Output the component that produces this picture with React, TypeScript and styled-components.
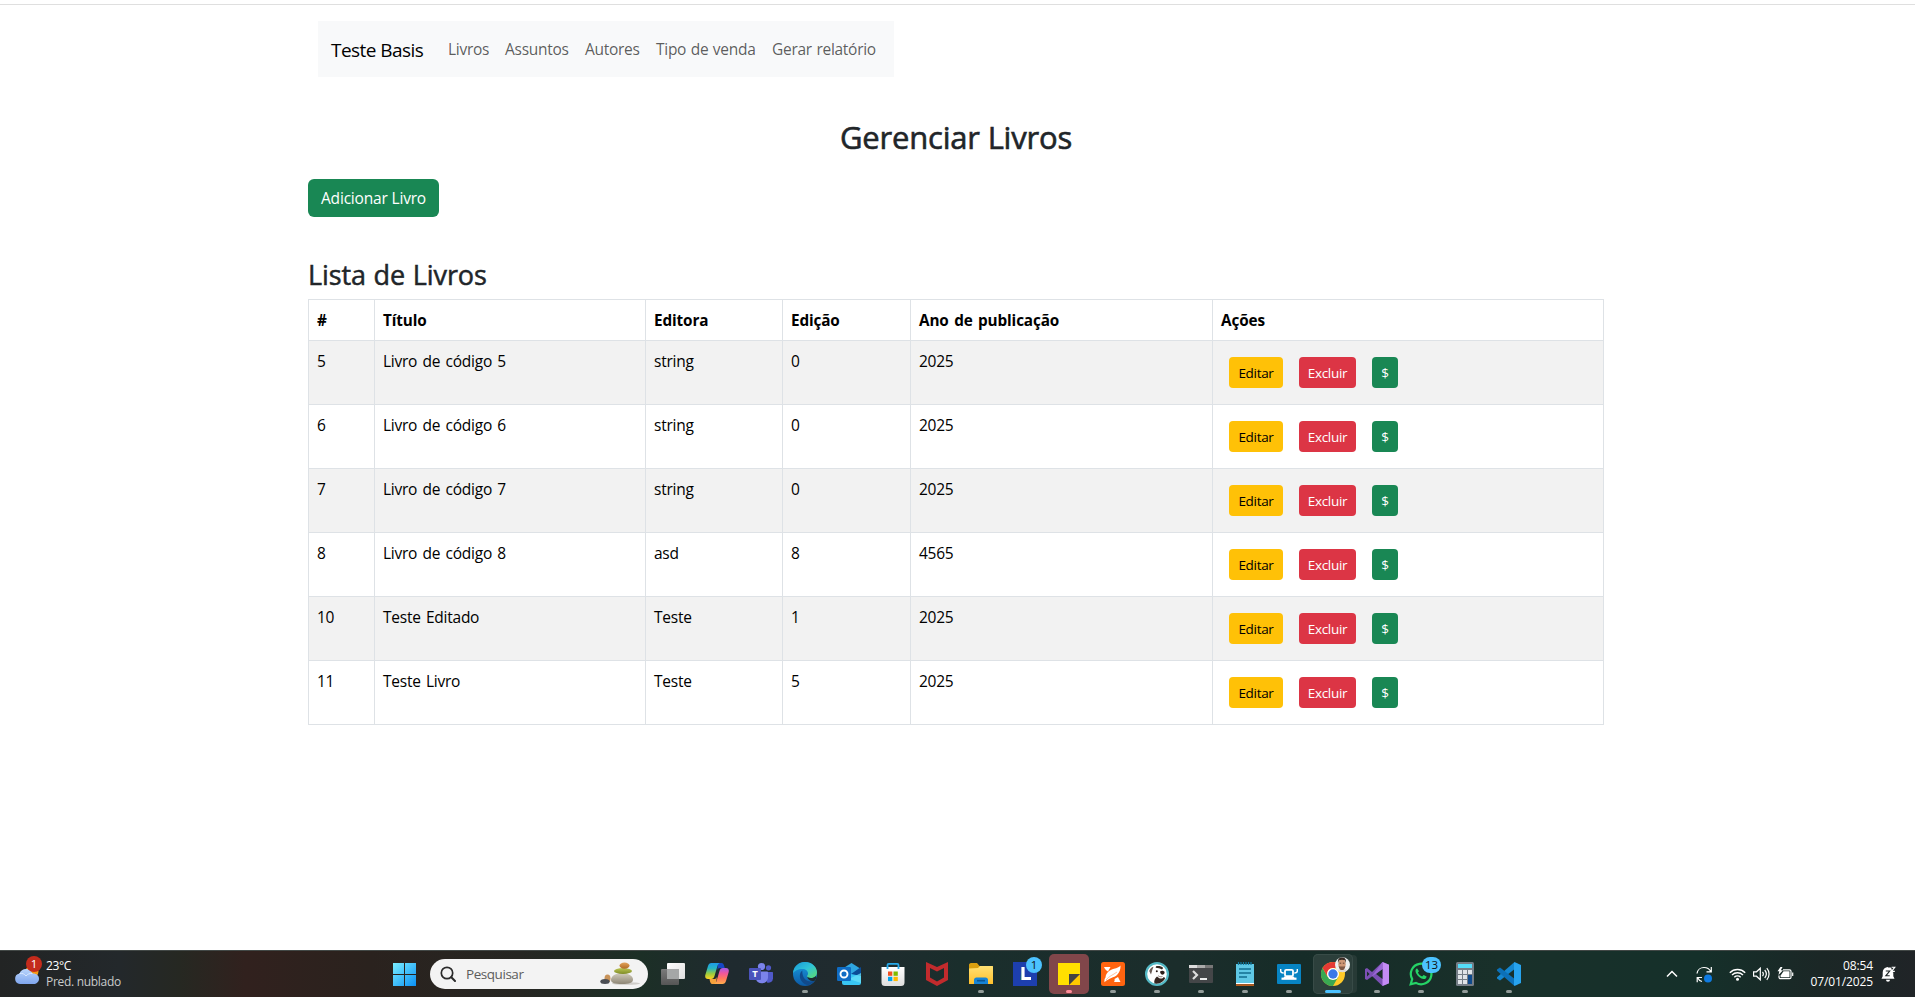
import React from 'react';
import styled, { createGlobalStyle } from 'styled-components';

const GlobalStyle = createGlobalStyle`
  *, *::before, *::after { box-sizing: border-box; }
  html, body { margin: 0; padding: 0; background: #fff; }
  body {
    font-family: "Open Sans", "Noto Sans", sans-serif;
    font-size: 15.5px;
    line-height: 24px;
    color: #212529;
    overflow: hidden;
  }
  svg { display: block; }
`;

const Screen = styled.div`
  display: flex;
  flex-direction: column;
  width: 100%;
  height: 997px;
  overflow: hidden;
`;

const Page = styled.main`
  flex: 1;
  min-height: 0;
  margin-top: 4px;
  border-top: 1px solid #dfdfdf;
`;

const Container = styled.div`
  width: 1296px;
  margin-left: 308px;
`;

const Navbar = styled.nav`
  display: flex;
  align-items: center;
  width: 576px;
  height: 56px;
  margin: 16px 0 0 10px;
  padding: 0 12px;
  background: #f8f9fa;
`;

const Brand = styled.a`
  width: 94px;
  margin: 2px 23px 0 1px;
  font-size: 19px;
  line-height: 30px;
  letter-spacing: -0.55px;
  color: #000;
  white-space: nowrap;
`;

const NavLinks = styled.div`
  display: flex;
  gap: 16px;
`;

const NavLink = styled.a<{ $w: number }>`
  width: ${(p) => p.$w}px;
  color: rgba(0, 0, 0, 0.65);
  letter-spacing: -0.28px;
  word-spacing: 0.8px;
  white-space: nowrap;
`;

const Title = styled.h1`
  margin: 41px 0 0;
  font-size: 31px;
  font-weight: 500;
  line-height: 38px;
  letter-spacing: -0.2px;
  text-align: center;
  -webkit-text-stroke: 0.6px currentColor;
`;

const Button = styled.button<{ $tone: 'success' | 'warning' | 'danger'; $small?: boolean; $w: number }>`
  width: ${(p) => p.$w}px;
  height: ${(p) => (p.$small ? 31 : 38)}px;
  padding: 0;
  border: 0;
  border-radius: ${(p) => (p.$small ? 4 : 6)}px;
  background: ${(p) => ({ success: '#198754', warning: '#ffc107', danger: '#dc3545' })[p.$tone]};
  color: ${(p) => (p.$tone === 'warning' ? '#000' : '#fff')};
  font-family: inherit;
  font-size: ${(p) => (p.$small ? 13.5 : 15.5)}px;
  letter-spacing: ${(p) => (p.$small ? -0.3 : -0.18)}px;
  white-space: nowrap;
`;

const AddRow = styled.div`
  display: flex;
  margin-top: 23px;
`;

const Subtitle = styled.h2`
  margin: 41px 0 8px;
  font-size: 27px;
  font-weight: 500;
  line-height: 33px;
  letter-spacing: -0.1px;
  word-spacing: 0.8px;
  -webkit-text-stroke: 0.5px currentColor;
`;

const Table = styled.table`
  width: 1296px;
  table-layout: fixed;
  border-collapse: collapse;
  color: #000;
  letter-spacing: -0.25px;
  word-spacing: 1.6px;
`;

const HeadCell = styled.th`
  height: 41px;
  padding: 8px;
  border: 1px solid #dee2e6;
  font-size: 15.3px;
  font-weight: 700;
  letter-spacing: -0.13px;
  text-align: left;
  white-space: nowrap;
`;

const Row = styled.tr`
  height: 64px;
  &:nth-child(odd) { background: #f2f2f2; }
`;

const Cell = styled.td`
  padding: 8px;
  border: 1px solid #dee2e6;
  vertical-align: top;
`;

const Actions = styled.div`
  display: flex;
  gap: 16px;
  padding: 8px;
`;

/* ---------- taskbar ---------- */

const Taskbar = styled.footer`
  display: flex;
  align-items: stretch;
  height: 47px;
  border-top: 1px solid #424846;
  background: linear-gradient(90deg, #222424 0, #23282b 120px, #262822 180px, #31211e 245px, #2a221e 370px,
    #262622 520px, #1c2f26 640px, #1f2a2f 730px, #202b2f 850px, #1a2e2c 960px, #1b2d2b 1180px, #162c28 1300px,
    #19302a 1500px, #15302a 1700px, #1b2726 1820px, #202427 1915px);
  color: #fff;
  font-size: 12px;
  line-height: 16px;
`;

const Weather = styled.div`
  display: flex;
  width: 388px;
  padding: 5px 0 0 13px;
`;

const WeatherText = styled.div`
  margin: 2px 0 0 4px;
  span { display: block; color: #c9cbca; letter-spacing: -0.3px; }
  span:first-child { color: #fff; letter-spacing: -0.4px; }
`;

const StartButton = styled.div`
  width: 42px;
  padding: 12px 0 0 5px;
`;

const Search = styled.div`
  display: flex;
  align-items: center;
  width: 218px;
  height: 30px;
  margin: 8px 3px 0 0;
  padding: 0 7px 0 10px;
  border-radius: 15px;
  background: #f3f3f3;
  color: #5d5d5d;
  font-size: 13.5px;
  letter-spacing: -0.45px;
  span { flex: 1; margin-left: 10px; }
`;

const AppSlot = styled.div<{ $look?: 'alert' | 'active' }>`
  position: relative;
  width: 40px;
  height: 40px;
  margin: 3px 2px 0;
  padding: 8px 8px 0;
  border-radius: 5px;
  background: ${(p) => (p.$look === 'alert' ? '#81464a' : p.$look === 'active' ? '#2c3f3b' : 'transparent')};
  box-shadow: ${(p) => (p.$look === 'active' ? 'inset 0 0 0 1px #384b47, 5px 0 0 -1px #273a36' : 'none')};
`;

const Running = styled.i<{ $look?: 'alert' | 'active' }>`
  position: absolute;
  left: 50%;
  bottom: 1px;
  width: ${(p) => (p.$look === 'active' ? 16 : 6)}px;
  height: 3px;
  border-radius: 2px;
  transform: translateX(-50%);
  background: ${(p) => (p.$look === 'alert' ? '#ff8e9b' : p.$look === 'active' ? '#4cc2ff' : '#929b99')};
`;

const Badge = styled.b<{ $w: number }>`
  position: absolute;
  top: 3px;
  left: 21px;
  width: ${(p) => p.$w}px;
  height: 16px;
  border-radius: 8px;
  background: #4cc2ff;
  color: #111;
  font-weight: 400;
  font-size: 11.5px;
  line-height: 16px;
  text-align: center;
`;

const Tray = styled.div`
  display: flex;
  align-items: center;
  margin-left: auto;
  padding: 0 19px 0 0;
`;

const TrayItem = styled.span<{ $ml: number }>`
  margin-left: ${(p) => p.$ml}px;
`;

const Clock = styled.div`
  width: 79px;
  margin: -1px 8px 0 0;
  letter-spacing: -0.12px;
  text-align: right;
  white-space: nowrap;
`;

const G = ({ id, c, v }: { id: string; c: string[]; v?: boolean }) => (
  <linearGradient id={id} x1="0" y1="0" x2={v ? '0' : '1'} y2="1">
    {c.map((s, i) => <stop key={i} offset={i / (c.length - 1)} stopColor={s} />)}
  </linearGradient>
);

const Icon = ({ children }: { children: React.ReactNode }) => (
  <svg width="24" height="24" viewBox="0 0 24 24" fill="none">{children}</svg>
);

const TaskView = () => (
  <Icon>
    <defs><G id="tv1" c={['#fff', '#dedede']} /><G id="tv2" v c={['#7b7b7b', '#555']} /></defs>
    <rect x="6" y="1" width="18" height="16" rx="1" fill="url(#tv1)" />
    <rect x="0" y="7" width="18" height="16" rx="1" fill="url(#tv2)" />
    <path d="M6 7h12v10H6z" fill="#a5a7a7" />
  </Icon>
);

const Copilot = () => (
  <Icon>
    <defs>
      <G id="cp1" v c={['#1e9be8', '#25b5c4', '#9acb3e', '#ffd021']} />
      <G id="cp2" v c={['#a35bea', '#f0569c', '#ff7a5c', '#ffad4d']} />
    </defs>
    <path d="M13 1h3.500c1.500 0 2 1 2.500 2.400l.8 2.600H15c-1.500 0-2.200.8-2.700 2.400z" fill="#1747c5" />
    <path d="M11 22H8c-1.800 0-2.500-1-3-2.600L4.500 17H9c1.600 0 2.300-.7 2.800-2.300z" fill="#f6a13c" />
    <path d="M6.500 1H15c-1.500.6-2.200 1.700-2.700 3.400L9.500 14c-.6 2-1.500 3-3.400 3H3C.7 17-.2 15.400.3 13L3 4c.6-2 1.600-3 3.500-3z" fill="url(#cp1)" />
    <path d="M17.500 22H9c1.500-.6 2.200-1.700 2.700-3.400L14.500 9c.6-2 1.500-3 3.400-3H21c2.300 0 3.200 1.600 2.700 4L21 19c-.6 2-1.600 3-3.500 3z" fill="url(#cp2)" />
  </Icon>
);

const Teams = () => (
  <Icon>
    <circle cx="19.500" cy="5.800" r="2.600" fill="#5059c9" />
    <path d="M16 10h7c.6 0 1 .4 1 1v5.500a4.500 4.500 0 0 1-6 4z" fill="#5059c9" />
    <circle cx="12.500" cy="4.500" r="3.600" fill="#7b83eb" />
    <path d="M8 9.500h10c.6 0 1 .4 1 1V16a6.300 6.300 0 0 1-12 1.500z" fill="#7b83eb" />
    <rect x="0" y="6" width="12" height="12" rx="1" fill="#4b53bc" />
    <text x="6" y="15.300" fontSize="9.500" fontWeight="700" fill="#fff" textAnchor="middle">T</text>
  </Icon>
);

const Edge = () => (
  <Icon>
    <defs><G id="ed1" c={['#1798d8', '#2fc3d8', '#5fdc6c']} /><G id="ed2" v c={['#1b9de2', '#0c59a4']} /></defs>
    <circle cx="12" cy="12" r="12" fill="url(#ed2)" />
    <path d="M0 11.500C.5 4.500 5.600 0 12 0c7 0 12 5 12 10.200 0 3.600-2.800 5.800-6 5.800-2.600 0-4-.9-4-1.800 0-.6 1-1 1-2.700C15 9 12.700 7 9.500 7 5 7 1.200 9 0 11.500z" fill="url(#ed1)" />
    <path d="M9.300 8.500C6.500 10.500 6 15.500 8.500 19c2 2.800 5 4.300 7.500 3.900 2.500-.7 4.600-2.300 5.800-4.300-6 2.400-13-.6-12.500-10.100z" fill="#114a8b" />
    <path d="M14.200 14.600c.5.800 1.800 1.400 3.800 1.400 1.800 0 3.400-.7 4.800-2.100l.7 2.100-1.700 2.700c-3.500 1.300-7-.5-7.600-4.100z" fill="#1e2b30" />
  </Icon>
);

const Outlook = () => (
  <Icon>
    <path d="M5 7l9.500-6L24 7v4l-8 5-11-4z" fill="#2fa6e0" />
    <path d="M14 12L24 5v8l-9 6z" fill="#0a4c97" />
    <path d="M5 12h9l10 2v7a2 2 0 0 1-2 2H7a2 2 0 0 1-2-2z" fill="#38c6f4" />
    <path d="M24 11v10L12 17z" fill="#67dff8" opacity=".75" />
    <rect x="0" y="5" width="14" height="14" rx="1.200" fill="#0f6cc4" />
    <circle cx="7" cy="12" r="3.500" stroke="#fff" strokeWidth="1.900" />
  </Icon>
);

const Store = () => (
  <Icon>
    <defs><G id="st" v c={['#fff', '#dedede']} /></defs>
    <path d="M.5 5h23v15.500a3.500 3.500 0 0 1-3.500 3.500H4A3.500 3.500 0 0 1 .5 20.500z" fill="url(#st)" />
    <path d="M6.500 7V3c0-.8.500-1.200 1.200-1.200h8.600c.7 0 1.200.4 1.200 1.200v4" stroke="#26a9ea" strokeWidth="1.800" />
    <path d="M7 9.500h4.300v4.300H7z" fill="#f25022" /><path d="M12.500 9.500h4.300v4.300h-4.300z" fill="#7fba00" />
    <path d="M7 14.800h4.300v4.300H7z" fill="#00a4ef" /><path d="M12.500 14.800h4.300v4.300h-4.300z" fill="#ffb900" />
  </Icon>
);

const Shield = () => (
  <Icon>
    <path d="M1 0l11 5L23 0v18l-11 6L1 18zM5 6v9.500l7 4 7-4V6l-7 3.400z" fill="#c22b2d" fillRule="evenodd" />
  </Icon>
);

const Explorer = () => (
  <Icon>
    <defs><G id="ex" v c={['#ffe074', '#ffc02c']} /></defs>
    <path d="M0 3c0-1 .7-2 2-2h6l2.500 3H24v4H0z" fill="#d99f10" />
    <path d="M0 6.500L9 6l2-2h12c.6 0 1 .5 1 1v17H0z" fill="url(#ex)" />
    <path d="M5 22v-4c0-1.300 1-2.500 2.500-2.500h9c1.500 0 2.500 1.200 2.500 2.500v4z" fill="#1684d6" />
    <path d="M8 18.700h8" stroke="#095695" strokeWidth="1.600" />
  </Icon>
);

const LetterL = () => (
  <Icon>
    <path d="M0 0h24v24H0z" fill="#1d3fae" />
    <path d="M9 6L7 18h4z" fill="#0c6b74" />
    <path d="M10 5v11.500h8" stroke="#fff" strokeWidth="3.200" />
  </Icon>
);

const Notes = () => (
  <Icon>
    <path d="M1 1h22v11L12 23H1z" fill="#ffdf00" /><path d="M23 12v11H12z" fill="#ffc800" />
    <path d="M12 12h11L12 23z" fill="#424242" />
  </Icon>
);

const OrangeBird = () => (
  <Icon>
    <rect width="24" height="24" rx="2.500" fill="#ff6410" />
    <path d="M3 5h6.500L7 9.500C5.300 8.500 3.800 7 3 5z" fill="#fff" />
    <path d="M4.500 15.500C5 11 8.500 8 13 6.800c3-.8 5-1.500 6.500-3.300.2 4-1 7-3.500 9.500-3 2.700-8 3-12.500 7.200-.3-1.800 0-3.500 1-4.700z" fill="#fff" />
    <path d="M13.500 17l3.500-2 2.500 5h-6.500c.7-.8.800-2 .5-3z" fill="#fff" />
    <path d="M5 18c3-4 7-5 11-8" stroke="#ff9a60" strokeWidth=".6" />
  </Icon>
);

const Beaver = () => (
  <Icon>
    <circle cx="12" cy="12" r="10.900" fill="#fff" stroke="#54b9c5" strokeWidth="2.200" />
    <path d="M4.200 9c.8-2.300 2.300-3.600 4.300-4.200L7.300 8 6 12.500z" fill="#6b5c55" />
    <path d="M11 4.300c3-.6 5.500 0 7.200 1.700L17 7.500c-2-1.200-4-1.600-6.300-1.700z" fill="#35261f" />
    <path d="M9.500 21.500c-.8-3 .3-5 2.500-7l2.300 1.700c2 .8 3.500.3 4.400-1.200l1.500 1c-1.500 3.800-5.700 6.300-10.700 5.500z" fill="#33241f" />
    <path d="M15.300 9.300c1.500-1 4-.5 4.300 1 .2 1.800-1.800 2.700-3 2.200-1.200-.6-1.800-2-1.300-3.200z" fill="#2b1c18" />
    <circle cx="11.800" cy="9.300" r="1" fill="#2b1c18" />
    <path d="M13 13.500c1 1.200 2.500 1.700 4.500 1" stroke="#806c63" strokeWidth=".8" />
  </Icon>
);

const Terminal = () => (
  <Icon>
    <rect y="3" width="24" height="18" rx="1" fill="#444648" />
    <path d="M0 3h8v3H0z" fill="#ddd" /><path d="M8 3h8v3H8z" fill="#aaa" /><path d="M16 3h8v3h-8z" fill="#777" />
    <path d="M4 9l4 4-4 4" stroke="#ddd" strokeWidth="2.200" /><path d="M11 17h7" stroke="#fff" strokeWidth="1.800" />
  </Icon>
);

const Notepad = () => (
  <Icon>
    <path d="M3 2h18v19H3z" fill="#5fc8e5" /><path d="M3 21h18v1.200H3z" fill="#fff" /><path d="M3 22.200h18V24H3z" fill="#b65b1c" />
    <path d="M5.500 0v3M8 0v3M10.500 0v3M13 0v3M15.500 0v3M18 0v3" stroke="#12799f" strokeWidth="1.200" />
    <path d="M6 7h12M6 11h12M6 15h8" stroke="#126e90" strokeWidth="1.700" />
  </Icon>
);

const RemoteApp = () => (
  <Icon>
    <rect y="2" width="24" height="20" rx="1" fill="#0784c3" />
    <rect x="8" y="7.800" width="8" height="6.400" rx="1.200" stroke="#fff" strokeWidth="1.800" />
    <path d="M4.500 16.700h15" stroke="#fff" strokeWidth="2.200" />
    <path d="M3.700 7v2c0 1.500.8 2 3 2M20.300 7v2c0 1.500-.8 2-3 2" stroke="#fff" strokeWidth="1.400" />
    <path d="M7.500 14.500L6 16.500h12l-1.500-2z" fill="#fff" />
  </Icon>
);

const Chrome = () => (
  <svg width="30" height="29" viewBox="0 -5 30 29">
    <circle cx="12" cy="12" r="12" fill="#ffca28" />
    <path d="M1.600 6A12 12 0 0 0 12 24l5.200-9L12 12 6.800 15z" fill="#39a852" />
    <path d="M1.600 6A12 12 0 0 1 22.400 6H12a6 6 0 0 0-5.200 9z" fill="#e53935" />
    <circle cx="12" cy="12" r="6" fill="#fff" /><circle cx="12" cy="12" r="4.700" fill="#3b78e7" />
    <circle cx="21.500" cy="2.800" r="7.500" fill="#eef0f1" />
    <path d="M17 8.500c1-1.500 2.500-2 4.500-2s3.500.5 4.500 2c-2.500 2-6.500 2-9 0z" fill="#ddd8d3" />
    <ellipse cx="21" cy="2.200" rx="3.700" ry="5.500" fill="#cf9776" />
    <path d="M17 1c-.5-4.300 1.500-5.500 4-5.500s4.500 1.200 4 5.500l-1-2.700c-2-.8-4-.8-6 0z" fill="#3a2b24" />
    <path d="M17.700 4.200c1.900.5 4.800.5 6.600 0-.3 2.400-1.500 3.900-3.300 3.900s-3-1.500-3.300-3.900z" fill="#7d5744" />
    <path d="M18.600 1.200h1.600M21.800 1.200h1.600" stroke="#4a3128" strokeWidth=".8" />
  </svg>
);

const VisualStudio = () => (
  <Icon>
    <path d="M17.500 0L24 2.800v18.400L17.500 24 7 14 2 18l-2-1V7l2-1 5 4z" fill="#7c50b5" />
    <path d="M17.500 0L24 2.800v18.400L17.500 24z" fill="#c48bf5" />
    <path d="M17.500 7v10L11 12zM2 9.500v5L4.600 12z" fill="#1b2e2a" />
    <path d="M7 14L17.500 0v7L2 18z" fill="#9a68d5" />
  </Icon>
);

const WhatsApp = () => (
  <Icon>
    <path d="M1.700 22.300l1.500-5.200A10.300 10.300 0 1 1 7 20.900z" stroke="#25d366" strokeWidth="2.200" />
    <path d="M8 6.200c-1.900 1-2 3.200-.6 5.600 1.700 2.900 4.300 4.900 7 5.300 1.800.2 3.100-1 3.200-2.700l-3-1.500-1.500 1.700c-2-.8-3.300-2.200-4.200-4l1.100-1.400z" fill="#25d366" />
  </Icon>
);

const Calculator = () => (
  <Icon>
    <rect x="3" width="18" height="24" rx="1.500" fill="#747d86" />
    <path d="M5 2h14v4H5z" fill="#55dcf8" />
    <path d="M5 8h4v4H5zM10 8h4v4h-4zM15 8h4v4h-4zM5 13h4v4H5zM10 13h4v4h-4zM5 18h4v4H5zM10 18h4v4h-4z" fill="#dfe3e7" />
    <path d="M15 13h4v9h-4z" fill="#0f4a8c" />
  </Icon>
);

const VSCode = () => (
  <Icon>
    <path d="M17.500 0L19 6 3 18.500 0 16.500v-1.200z" fill="#1486cf" />
    <path d="M0 8.700v-1.200L3 5.500 19 18l-1.500 6z" fill="#0c70b8" />
    <path d="M17.500 0L24 3v18l-6.500 3-.5-1V1z" fill="#27a3ee" />
  </Icon>
);

type App = { icon: React.FC; run?: boolean; look?: 'alert' | 'active'; badge?: string };

const apps: App[] = [
  { icon: TaskView }, { icon: Copilot }, { icon: Teams }, { icon: Edge, run: true }, { icon: Outlook },
  { icon: Store }, { icon: Shield }, { icon: Explorer, run: true }, { icon: LetterL, badge: '1' },
  { icon: Notes, run: true, look: 'alert' }, { icon: OrangeBird, run: true }, { icon: Beaver, run: true },
  { icon: Terminal, run: true }, { icon: Notepad, run: true }, { icon: RemoteApp, run: true },
  { icon: Chrome, run: true, look: 'active' }, { icon: VisualStudio, run: true },
  { icon: WhatsApp, run: true, badge: '13' }, { icon: Calculator, run: true }, { icon: VSCode, run: true },
];

const ChromeLift = styled.div`
  margin-top: -5px;
`;

const WeatherIcon = () => (
  <svg width="29" height="30" viewBox="0 0 29 30">
    <defs><G id="cl" v c={['#b9d4fb', '#7fa6ee']} /></defs>
    <circle cx="19" cy="15.500" r="6.500" fill="#f59a16" />
    <path d="M7 28a5.300 5.300 0 0 1-.5-10.500C7.500 14.500 10 13 13 13c3.200 0 5.500 1.800 6.500 4.500 3.800-.2 6.500 2 6.500 5.200S23.500 28 20.500 28z" fill="url(#cl)" />
    <path d="M6.500 17.500c3-.5 5 .5 6.500 2.500M13 20c1.500-2 3.500-2.700 6.500-2.500" stroke="#d9e8ff" fill="none" />
    <circle cx="21" cy="8" r="8" fill="#c42b1c" />
    <text x="21" y="12.300" fontSize="11.500" fill="#fff" textAnchor="middle">1</text>
  </svg>
);

const StartIcon = () => (
  <svg width="23" height="23" viewBox="0 0 23 23">
    <defs>
      <linearGradient id="win" gradientUnits="userSpaceOnUse" x1="0" y1="0" x2="23" y2="23">
        <stop offset="0" stopColor="#7aeeff" /><stop offset="1" stopColor="#0a90f5" />
      </linearGradient>
    </defs>
    <path d="M0 0h11v11H0zM12 0h11v11H12zM0 12h11v11H0zM12 12h11v11H12z" fill="url(#win)" />
  </svg>
);

const Stones = () => (
  <svg width="41" height="24" viewBox="0 0 41 24">
    <defs>
      <G id="s1" v c={['#d3cdbd', '#8d8675']} /><G id="s2" v c={['#bcc653', '#7f8c27']} /><G id="s3" v c={['#e2a25a', '#b06a25']} />
    </defs>
    <ellipse cx="26" cy="21.500" rx="14" ry="1.300" fill="#cfcdc9" />
    <ellipse cx="7.500" cy="16.500" rx="3" ry="4" fill="#c8935a" />
    <ellipse cx="5" cy="19.500" rx="4.700" ry="2.500" fill="#4b4e54" />
    <path d="M11 18c0-4 4.500-7 11-7s11 3 11 6.500-4 4.500-11 4.500-11-1-11-4z" fill="url(#s1)" />
    <ellipse cx="23" cy="9" rx="9" ry="3" fill="url(#s2)" />
    <ellipse cx="24.500" cy="3.600" rx="5" ry="3.100" fill="url(#s3)" />
  </svg>
);

const books = [
  ['5', 'Livro de código 5', 'string', '0', '2025'],
  ['6', 'Livro de código 6', 'string', '0', '2025'],
  ['7', 'Livro de código 7', 'string', '0', '2025'],
  ['8', 'Livro de código 8', 'asd', '8', '4565'],
  ['10', 'Teste Editado', 'Teste', '1', '2025'],
  ['11', 'Teste Livro', 'Teste', '5', '2025'],
];

const columns: [string, number][] = [
  ['#', 66], ['Título', 271], ['Editora', 137], ['Edição', 128], ['Ano de publicação', 302], ['Ações', 391],
];

const links: [string, number][] = [
  ['Livros', 41], ['Assuntos', 64], ['Autores', 55], ['Tipo de venda', 100], ['Gerar relatório', 104],
];

export default function App() {
  return (
    <Screen>
      <GlobalStyle />
      <Page>
        <Container>
          <Navbar>
            <Brand>Teste Basis</Brand>
            <NavLinks>{links.map(([t, w]) => <NavLink key={t} $w={w}>{t}</NavLink>)}</NavLinks>
          </Navbar>
          <Title>Gerenciar Livros</Title>
          <AddRow><Button $tone="success" $w={131}>Adicionar Livro</Button></AddRow>
          <Subtitle>Lista de Livros</Subtitle>
          <Table>
            <colgroup>{columns.map(([t, w]) => <col key={t} width={w} />)}</colgroup>
            <thead><tr>{columns.map(([t]) => <HeadCell key={t}>{t}</HeadCell>)}</tr></thead>
            <tbody>
              {books.map((b) => (
                <Row key={b[0]}>
                  {b.map((v, i) => <Cell key={i}>{v}</Cell>)}
                  <Cell>
                    <Actions>
                      <Button $small $tone="warning" $w={54}>Editar</Button>
                      <Button $small $tone="danger" $w={57}>Excluir</Button>
                      <Button $small $tone="success" $w={26}>$</Button>
                    </Actions>
                  </Cell>
                </Row>
              ))}
            </tbody>
          </Table>
        </Container>
      </Page>
      <Taskbar>
        <Weather>
          <WeatherIcon />
          <WeatherText><span>23°C</span><span>Pred. nublado</span></WeatherText>
        </Weather>
        <StartButton><StartIcon /></StartButton>
        <Search>
          <svg width="16" height="16" viewBox="0 0 16 16" fill="none" stroke="#2b2b2b" strokeWidth="1.700" strokeLinecap="round">
            <circle cx="7" cy="7" r="5.700" /><path d="M11.300 11.300L15 15" strokeWidth="2" />
          </svg>
          <span>Pesquisar</span>
          <Stones />
        </Search>
        {apps.map(({ icon: Pic, run, look, badge }, i) => (
          <AppSlot key={i} $look={look}>
            {look === 'active' ? <ChromeLift><Pic /></ChromeLift> : <Pic />}
            {run && <Running $look={look} />}
            {badge && <Badge $w={badge.length > 1 ? 19 : 16}>{badge}</Badge>}
          </AppSlot>
        ))}
        <Tray>
          <TrayItem $ml={0}>
            <svg width="12" height="8" viewBox="0 0 12 8" fill="none" stroke="#fff" strokeWidth="1.500"><path d="M1 6.500l5-5 5 5" /></svg>
          </TrayItem>
          <TrayItem $ml={18}>
            <svg width="17" height="17" viewBox="0 0 17 17" fill="none" stroke="#fff" strokeWidth="1.200">
              <path d="M1 7.500C1.500 4 4.500 1.500 8 1.500c3 0 5.500 1.500 6.700 4M15.300 1v4.800h-4.800M6 15.500c-2-.5-3.600-2-4.300-3.700M1.200 16.300v-4.800H6" />
              <circle cx="12" cy="12.500" r="4" fill="#0f7be0" stroke="none" />
            </svg>
          </TrayItem>
          <TrayItem $ml={16}>
            <svg width="17" height="13" viewBox="0 0 17 13" fill="none" stroke="#fff" strokeWidth="1.400">
              <path d="M.8 4.700a11 11 0 0 1 15.400 0M3 7a8 8 0 0 1 11 0M5.300 9.200a4.700 4.700 0 0 1 6.400 0" /><circle cx="8.500" cy="11.200" r="1.500" fill="#fff" stroke="none" />
            </svg>
          </TrayItem>
          <TrayItem $ml={7}>
            <svg width="17" height="14" viewBox="0 0 17 14" fill="none" stroke="#fff" strokeWidth="1.200">
              <path d="M.6 4.800h2.900L7.300 1.200v11.600L3.500 9.200H.6zM9.500 4.800c1 1.300 1 3.100 0 4.400M11.700 3c2 2.400 2 5.600 0 8M13.800 1.200c3 3.400 3 8.200 0 11.600" />
            </svg>
          </TrayItem>
          <TrayItem $ml={7}>
            <svg width="17" height="14" viewBox="0 0 17 14" fill="none" stroke="#fff" strokeWidth="1.200">
              <path d="M6 2.800h6.500c.8 0 1.500.6 1.500 1.400v6c0 .8-.7 1.500-1.500 1.500h-9c-.8 0-1.500-.7-1.500-1.500V8.500M15.700 5.500v3.500" />
              <path d="M6.500 4.300h6v6H3.600V8.500z" fill="#fff" stroke="none" /><path d="M3.500 0L.5 4.300h1.800L1.500 8 6 3.300H3.800L5.500 0z" fill="#fff" stroke="none" />
            </svg>
          </TrayItem>
          <Clock>08:54<br />07/01/2025</Clock>
          <svg width="15" height="16" viewBox="0 0 15 16">
            <path d="M7 1a5.300 5.300 0 0 0-5.300 5.300v3.900L.5 12.800h13l-1.200-2.600V1.500H7zM5 13.700h4a2 2 0 0 1-4 0z" fill="#fff" />
            <path d="M9.300 0H15v6.500h-3z" fill="#1f2527" />
            <path d="M4.800 5h3.900l-3.900 4.800h3.900" stroke="#1e2526" strokeWidth="1.100" fill="none" />
            <path d="M10.600 1.200h3.200l-3.200 4.200h3.200" stroke="#fff" strokeWidth="1.100" fill="none" />
          </svg>
        </Tray>
      </Taskbar>
    </Screen>
  );
}
